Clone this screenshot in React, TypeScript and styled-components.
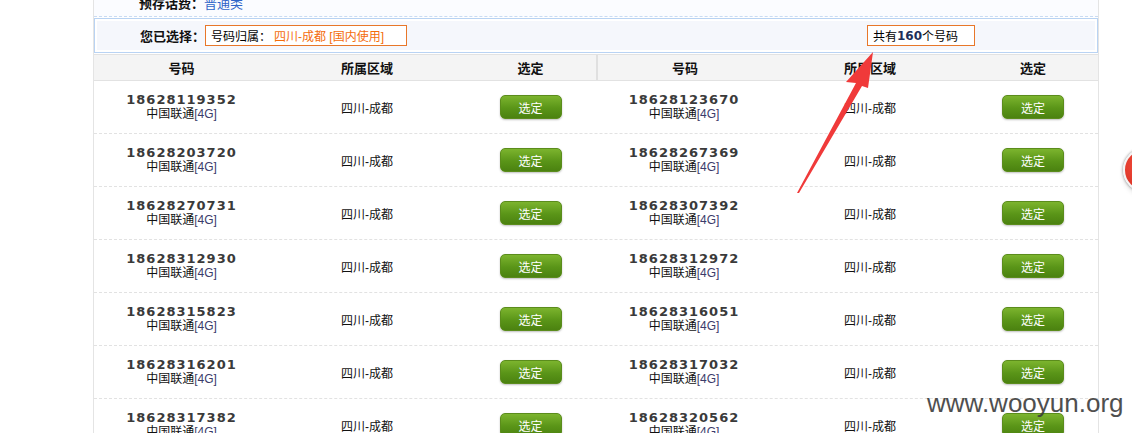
import React from 'react';
import styled, { createGlobalStyle } from 'styled-components';

const GlobalStyle = createGlobalStyle`
  html, body {
    margin: 0;
    padding: 0;
    background: #fff;
  }
  body {
    font-family: "Liberation Sans", "Noto Sans CJK SC", sans-serif;
    font-size: 12px;
    color: #000;
  }
`;

const Screen = styled.div`
  position: relative;
  width: 1132px;
  height: 433px;
  overflow: hidden;
  background: #fff;
`;

const Panel = styled.div`
  box-sizing: border-box;
  width: 1006px;
  margin-left: 93px;
  border-left: 1px solid #e4e4e4;
  border-right: 1px solid #e4e4e4;
`;

const InfoRow = styled.div`
  box-sizing: border-box;
  height: 29px;
  margin-top: -12px;
  display: flex;
  align-items: center;
  background: #fbfcff;
  border-bottom: 1px dashed #c9dbf2;
`;

const Label = styled.span`
  width: 110px;
  text-align: right;
  font-weight: bold;
  font-size: 13px;
  color: #111;
`;

const LinkText = styled.span`
  font-size: 13px;
  color: #2f64c8;
`;

const ChoiceBox = styled.div`
  box-sizing: border-box;
  height: 35px;
  margin-top: 1px;
  display: flex;
  align-items: center;
  background: #f5f7fc;
  border: 1px solid #b9d3f3;
  box-shadow: inset 0 0 0 2px #fff;
`;

const Tag = styled.div<{ $width: number; $gap: number }>`
  box-sizing: border-box;
  width: ${p => p.$width}px;
  height: 21px;
  margin-left: ${p => p.$gap}px;
  padding-left: 5px;
  display: flex;
  align-items: center;
  border: 1px solid #e8772a;
  background: #fff;
  font-size: 12px;
  white-space: nowrap;
`;

const Orange = styled.span`
  color: #f46d0c;
  margin-left: 3px;
`;

const Count = styled.b`
  font-family: "DejaVu Sans", sans-serif;
  font-size: 12px;
  color: #1d2f5a;
`;

const Grid = styled.div`
  display: grid;
  grid-template-columns: 175px 196px 131px 176px 196px 130px;
`;

const HeadRow = styled(Grid)`
  margin-top: 1px;
  height: 27px;
  box-sizing: border-box;
  background: #f4f4f4;
  border-top: 1px solid #e2e2e2;
  border-bottom: 1px solid #e2e2e2;
`;

const HeadCell = styled.div<{ $split?: boolean }>`
  display: flex;
  align-items: center;
  justify-content: center;
  font-weight: bold;
  font-size: 13px;
  color: #111;
  border-left: ${p => (p.$split ? '2px solid #e0e0e0' : 'none')};
`;

const Row = styled(Grid)`
  height: 53px;
  box-sizing: border-box;
  border-bottom: 1px dashed #e2e2e2;
`;

const Cell = styled.div`
  display: flex;
  flex-direction: column;
  align-items: center;
  justify-content: center;
`;

const Number = styled.div`
  font-family: "DejaVu Sans", sans-serif;
  font-weight: bold;
  font-size: 13px;
  letter-spacing: 1px;
  line-height: 15px;
  color: #3a3a3a;
`;

const Carrier = styled.div`
  font-size: 12px;
  line-height: 15px;
  color: #111;

  span {
    color: #3b3b6a;
  }
`;

const Region = styled.div`
  font-size: 12px;
  color: #111;
`;

const PickButton = styled.button`
  width: 62px;
  height: 24px;
  padding: 0;
  border: 1px solid #5b8c1c;
  border-radius: 5px;
  background: linear-gradient(#7cb42e, #5a9518 55%, #4b8210);
  box-shadow: 0 1px 2px rgba(0, 0, 0, 0.25);
  color: #fff;
  font-family: "Liberation Sans", "Noto Sans CJK SC", sans-serif;
  font-size: 12px;
  cursor: pointer;
`;

const Arrow = styled.svg`
  position: absolute;
  left: 0;
  top: 0;
  pointer-events: none;
`;

const Bubble = styled.div`
  position: absolute;
  left: 1123px;
  top: 148px;
  width: 40px;
  height: 40px;
  border-radius: 50%;
  border: 2px solid #f4f4f4;
  background: radial-gradient(circle at 35% 40%, #f04a3a, #d0281c);
  box-shadow: 0 0 3px rgba(0, 0, 0, 0.45), 2px 3px 6px rgba(0, 0, 0, 0.2);
`;

const Watermark = styled.div`
  position: absolute;
  left: 927px;
  top: 390px;
  font-family: "Liberation Sans", Arial, sans-serif;
  font-size: 26px;
  line-height: 1;
  color: #3c3c3c;
  opacity: 0.9;
`;

const left = [
  '18628119352',
  '18628203720',
  '18628270731',
  '18628312930',
  '18628315823',
  '18628316201',
  '18628317382',
];
const right = [
  '18628123670',
  '18628267369',
  '18628307392',
  '18628312972',
  '18628316051',
  '18628317032',
  '18628320562',
];

const Group: React.FC<{ num: string }> = ({ num }) => (
  <>
    <Cell>
      <Number>{num}</Number>
      <Carrier>
        中国联通<span>[4G]</span>
      </Carrier>
    </Cell>
    <Cell>
      <Region>四川-成都</Region>
    </Cell>
    <Cell>
      <PickButton>选定</PickButton>
    </Cell>
  </>
);

const App: React.FC = () => (
  <Screen>
    <GlobalStyle />
    <Panel>
      <InfoRow>
        <Label>预存话费：</Label>
        <LinkText>普通类</LinkText>
      </InfoRow>
      <ChoiceBox>
        <Label>您已选择：</Label>
        <Tag $width={202} $gap={0}>
          号码归属：<Orange>四川-成都 [国内使用]</Orange>
        </Tag>
        <Tag $width={108} $gap={460}>
          共有<Count>160</Count>个号码
        </Tag>
      </ChoiceBox>
      <HeadRow>
        <HeadCell>号码</HeadCell>
        <HeadCell>所属区域</HeadCell>
        <HeadCell>选定</HeadCell>
        <HeadCell $split>号码</HeadCell>
        <HeadCell>所属区域</HeadCell>
        <HeadCell>选定</HeadCell>
      </HeadRow>
      {left.map((num, i) => (
        <Row key={num}>
          <Group num={num} />
          <Group num={right[i]} />
        </Row>
      ))}
    </Panel>
    <Arrow width="1132" height="433" viewBox="0 0 1132 433">
      <polygon
        points="797,193 856,83 846,82 873,52 868,88 862,86 799,193"
        fill="#f03a3a"
      />
    </Arrow>
    <Bubble />
    <Watermark>www.wooyun.org</Watermark>
  </Screen>
);

export default App;
